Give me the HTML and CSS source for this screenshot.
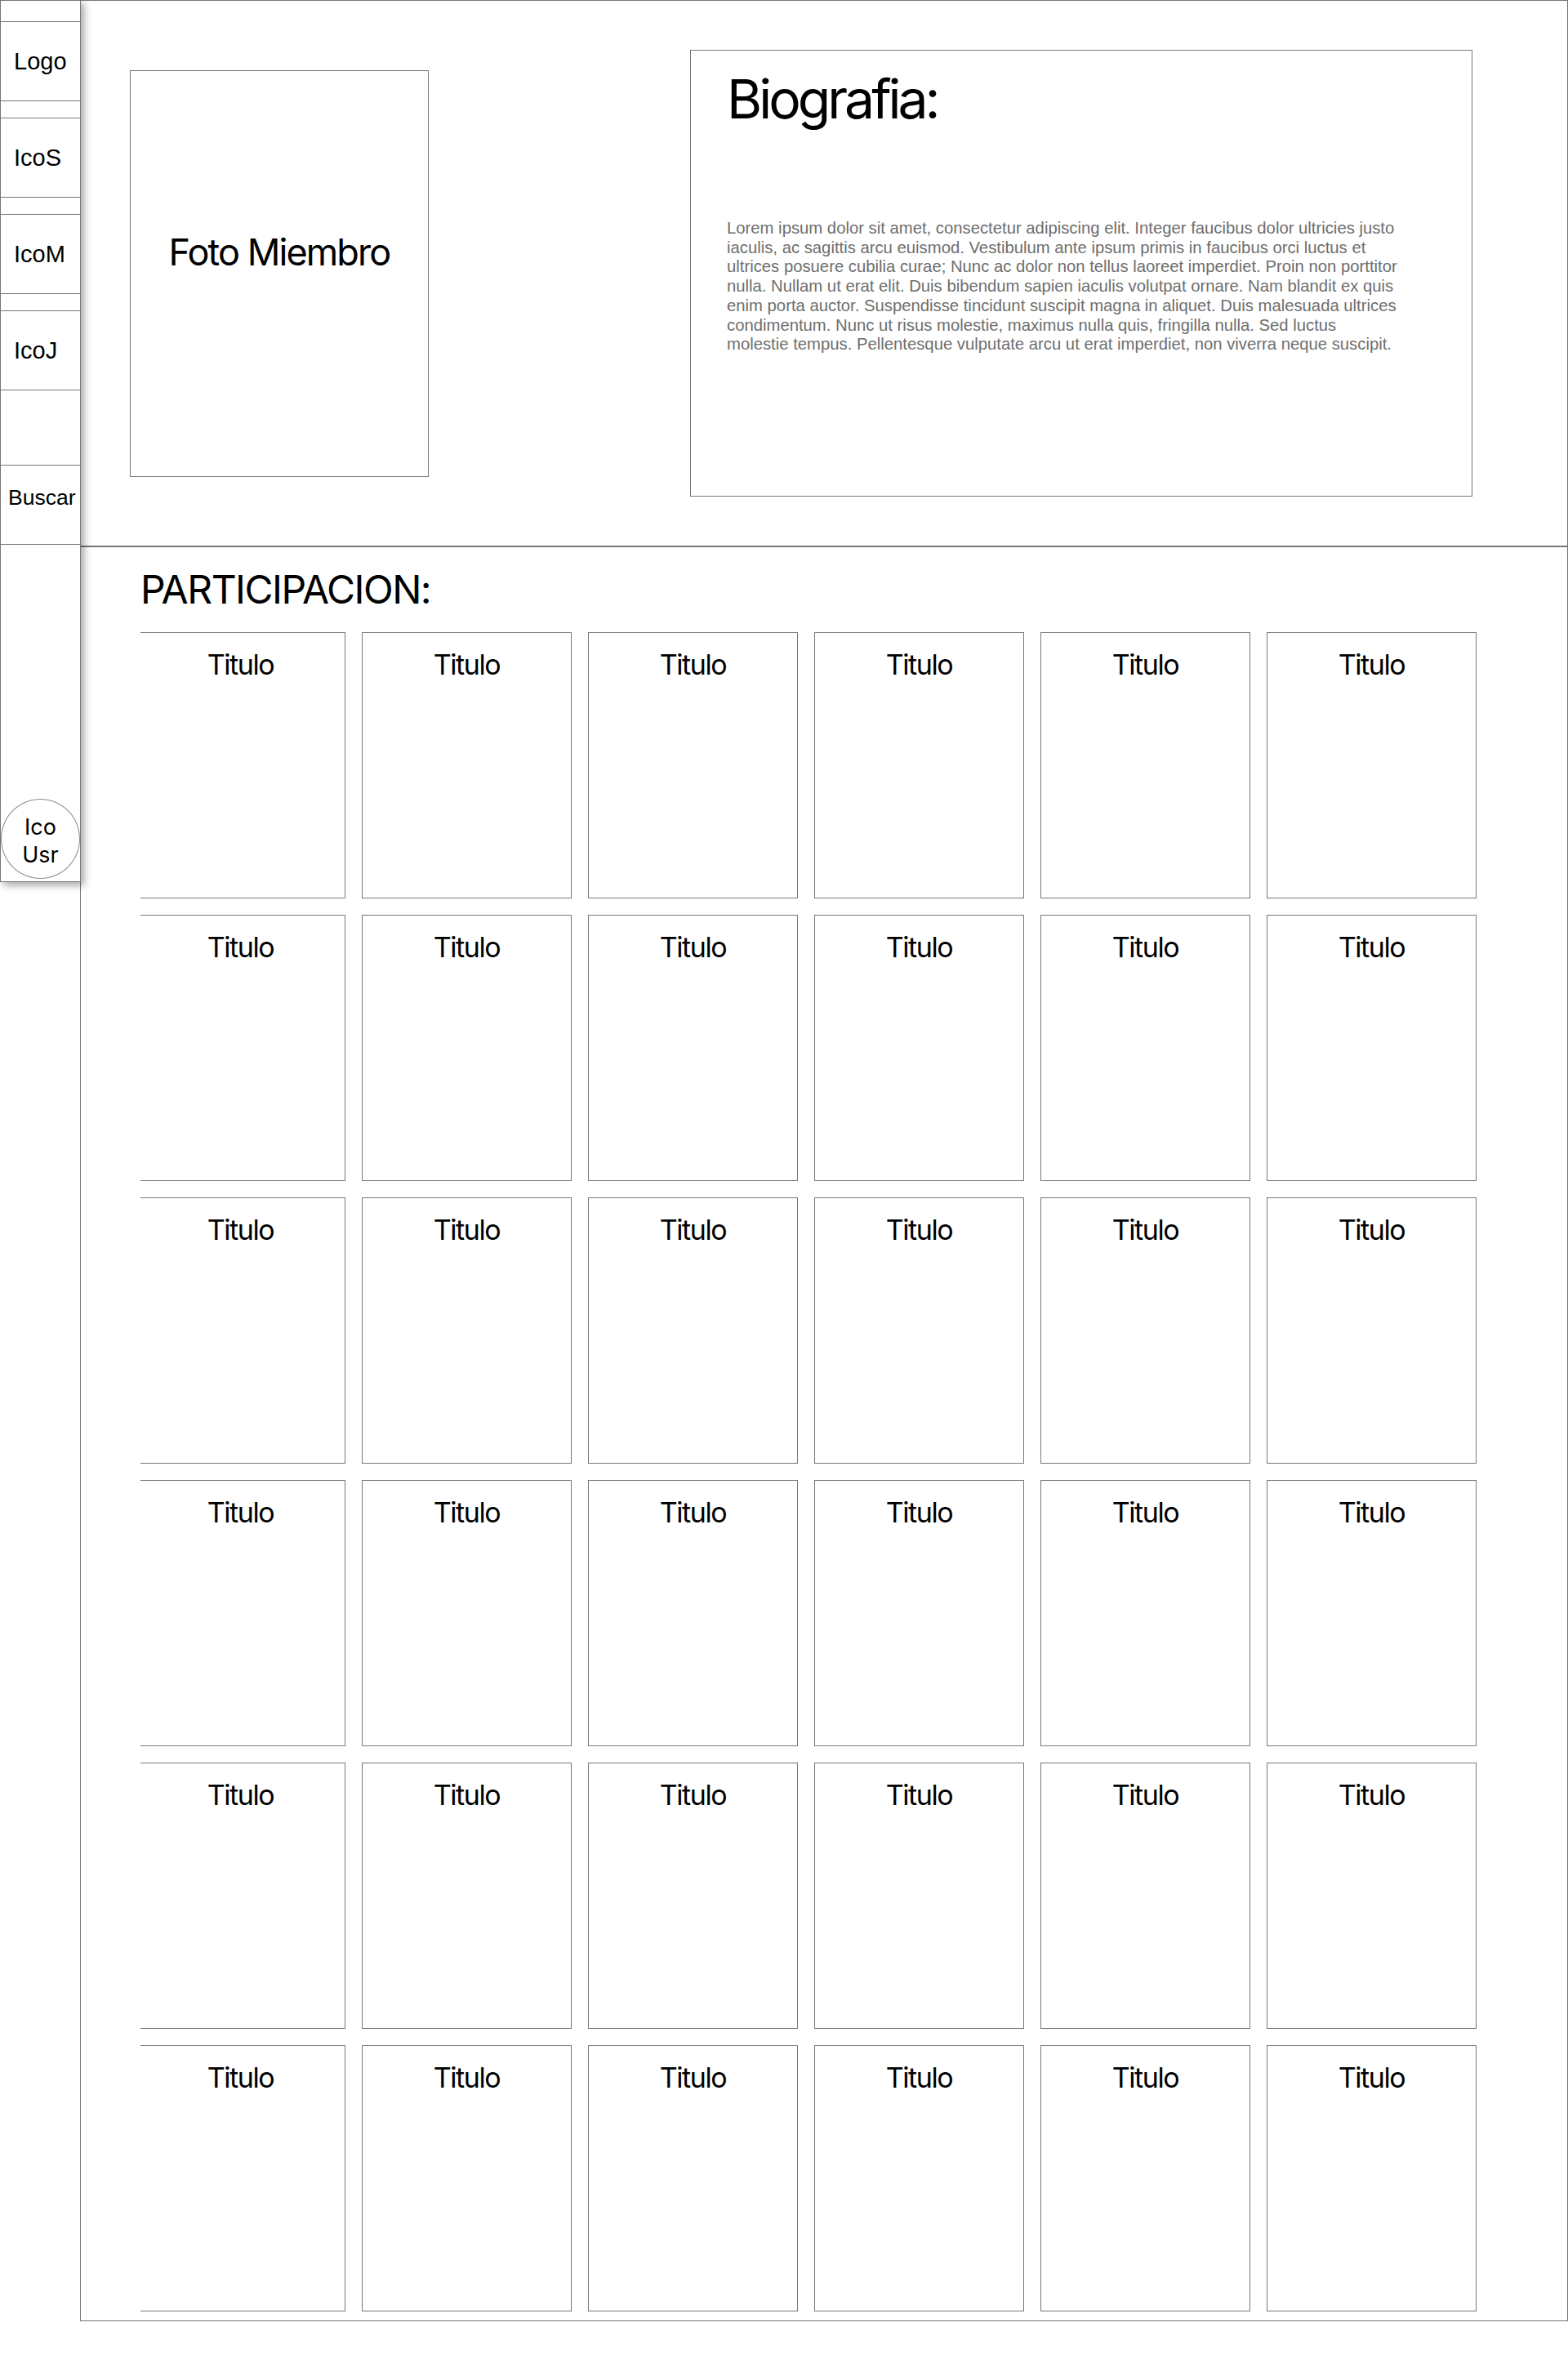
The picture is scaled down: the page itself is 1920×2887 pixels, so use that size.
FILE: index.html
```html
<!DOCTYPE html>
<html lang="es">
<head>
<meta charset="UTF-8">
<link rel="stylesheet" href="styles.css">
<title>Miembro</title>
</head>
<body>
<div class="page">

<nav class="sidebar">
  <div class="nav-item">Logo</div>
  <div class="nav-item">IcoS</div>
  <div class="nav-item">IcoM</div>
  <div class="nav-item">IcoJ</div>
  <div class="nav-item nav-search">Buscar</div>
  <div class="user-icon">Ico<br>Usr</div>
</nav>

<main class="content">
  <section class="profile">
    <div class="photo">Foto Miembro</div>
    <div class="bio">
      <h1>Biografia:</h1>
      <p>Lorem ipsum dolor sit amet, consectetur adipiscing elit. Integer faucibus dolor ultricies justo<br>
iaculis, ac sagittis arcu euismod. Vestibulum ante ipsum primis in faucibus orci luctus et<br>
ultrices posuere cubilia curae; Nunc ac dolor non tellus laoreet imperdiet. Proin non porttitor<br>
nulla. Nullam ut erat elit. Duis bibendum sapien iaculis volutpat ornare. Nam blandit ex quis<br>
enim porta auctor. Suspendisse tincidunt suscipit magna in aliquet. Duis malesuada ultrices<br>
condimentum. Nunc ut risus molestie, maximus nulla quis, fringilla nulla. Sed luctus<br>
molestie tempus. Pellentesque vulputate arcu ut erat imperdiet, non viverra neque suscipit.</p>
    </div>
  </section>

  <section class="participation">
    <h2>PARTICIPACION:</h2>
    <div class="cards-clip">
      <div class="cards">
        <div class="card">Titulo</div><div class="card">Titulo</div><div class="card">Titulo</div>
        <div class="card">Titulo</div><div class="card">Titulo</div><div class="card">Titulo</div>
        <div class="card">Titulo</div><div class="card">Titulo</div><div class="card">Titulo</div>
        <div class="card">Titulo</div><div class="card">Titulo</div><div class="card">Titulo</div>
        <div class="card">Titulo</div><div class="card">Titulo</div><div class="card">Titulo</div>
        <div class="card">Titulo</div><div class="card">Titulo</div><div class="card">Titulo</div>
        <div class="card">Titulo</div><div class="card">Titulo</div><div class="card">Titulo</div>
        <div class="card">Titulo</div><div class="card">Titulo</div><div class="card">Titulo</div>
        <div class="card">Titulo</div><div class="card">Titulo</div><div class="card">Titulo</div>
        <div class="card">Titulo</div><div class="card">Titulo</div><div class="card">Titulo</div>
        <div class="card">Titulo</div><div class="card">Titulo</div><div class="card">Titulo</div>
        <div class="card">Titulo</div><div class="card">Titulo</div><div class="card">Titulo</div>
      </div>
    </div>
  </section>
</main>

</div>
</body>
</html>
```

FILE: styles.css
```css
html, body {margin: 0; padding: 0; background: #fff;}
body {font-family: 'Inter', 'Liberation Sans', sans-serif; color: #000;}

.page {display: flex; align-items: flex-start;}

/* left navigation rail */
.sidebar {
  position: relative; z-index: 1; flex: none;
  display: flex; flex-direction: column;
  width: 99px; height: 1080px; box-sizing: border-box; padding-top: 25px;
  border: 1px solid #777; background: #fff;
  box-shadow: 4px 4px 9px rgba(0, 0, 0, 0.35);
  font-family: 'Liberation Sans', Arial, sans-serif;
}
.nav-item {
  display: flex; align-items: center;
  height: 98px; box-sizing: border-box; margin-bottom: 20px; padding-left: 16px;
  border-top: 1px solid #777; border-bottom: 1px solid #777;
  font-size: 29px;
}
.nav-search {margin-top: 71px; margin-bottom: 0; padding-left: 9px; padding-bottom: 18px; font-size: 26.5px;}
.user-icon {
  display: flex; align-items: center; justify-content: center; text-align: center;
  width: 97px; height: 98px; box-sizing: border-box; margin-top: auto; margin-bottom: 3px; padding-top: 6px;
  border: 1px solid #8c8c8c; border-radius: 50%;
  font-family: 'Inter', sans-serif; font-size: 27px; line-height: 34px;
}

/* main frame */
.content {flex: 1; min-width: 0; margin-left: -1px; border: 1px solid #777;}

.profile {
  display: flex; align-items: flex-start;
  height: 669px; box-sizing: border-box; padding: 60px 0 0 60px;
  border-bottom: 2px solid #777;
}
.photo {
  flex: none; display: flex; align-items: center; justify-content: center;
  width: 366px; height: 498px; box-sizing: border-box; margin-top: 25px; padding-bottom: 54px;
  border: 1px solid #777;
  font-size: 45px; letter-spacing: -1.9px;
}
.bio {
  flex: none; width: 958px; height: 547px; box-sizing: border-box; margin-left: 320px;
  padding: 19px 0 0 44px; border: 1px solid #777;
}
.bio h1 {margin: 0; font-weight: normal; font-size: 66px; line-height: 80px; letter-spacing: -4px;}
.bio p {
  margin: 107px 0 0; white-space: nowrap;
  font-family: 'Liberation Sans', Arial, sans-serif; font-size: 20.3px; line-height: 23.7px; color: #6e6e6e;
}

.participation {padding: 24px 0 11px 73px;}
.participation h2 {margin: 0 0 25px; font-weight: normal; font-size: 48px; line-height: 55px; letter-spacing: -1.5px;}
.cards-clip {overflow: hidden;}
.cards {
  display: grid; grid-template-columns: repeat(6, 257px); grid-auto-rows: 326px; gap: 20px;
  margin-left: -6px;
}
.card {
  border: 1px solid #777; text-align: center;
  padding-top: 18px; font-size: 34px; line-height: 41px; letter-spacing: -1.4px;
}
```
